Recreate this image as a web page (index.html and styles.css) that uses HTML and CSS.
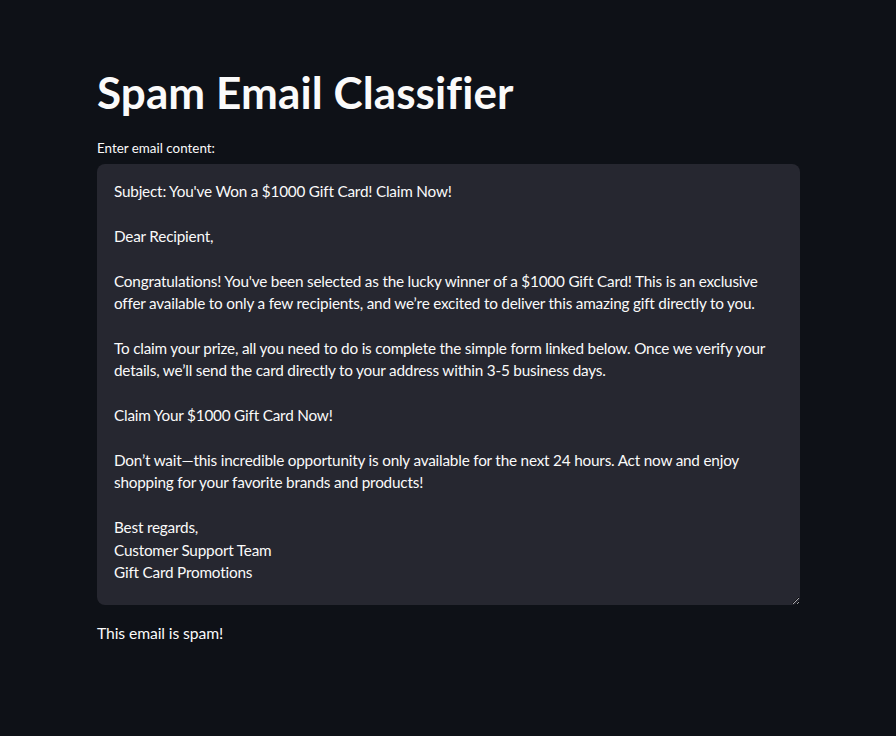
FILE: index.html
```html
<!DOCTYPE html>
<html lang="en">
<head>
<meta charset="utf-8">
<title>Spam Email Classifier</title>
<link rel="stylesheet" href="styles.css">
</head>
<body>
<main class="app">
  <h1 class="title">Spam Email Classifier</h1>
  <label class="label" for="email">Enter email content:</label>
  <textarea id="email" class="email-box">Subject: You've Won a $1000 Gift Card! Claim Now!

Dear Recipient,

Congratulations! You've been selected as the lucky winner of a $1000 Gift Card! This is an exclusive offer available to only a few recipients, and we’re excited to deliver this amazing gift directly to you.

To claim your prize, all you need to do is complete the simple form linked below. Once we verify your details, we’ll send the card directly to your address within 3-5 business days.

Claim Your $1000 Gift Card Now!

Don’t wait—this incredible opportunity is only available for the next 24 hours. Act now and enjoy shopping for your favorite brands and products!

Best regards,
Customer Support Team
Gift Card Promotions</textarea>
  <p class="result">This email is spam!</p>
</main>
</body>
</html>
```
FILE: styles.css
```css
html, body {
  margin: 0;
  padding: 0;
  background: #0e1117;
  color: #fafafa;
  font-family: Lato, "Noto Sans", sans-serif;
}
.app {
  width: 703px;
  margin: 0 0 0 97px;
  padding-top: 64px;
  display: flex;
  flex-direction: column;
}
.title {
  margin: 0;
  font-size: 44px;
  font-weight: 700;
  line-height: 56px;
  letter-spacing: 0.1px;
}
.label {
  margin-top: 18px;
  font-size: 13.4px;
  line-height: 20px;
  height: 20px;
}
.email-box {
  margin-top: 6px;
  box-sizing: border-box;
  width: 703px;
  height: 441px;
  background: #262730;
  color: #fafafa;
  border: none;
  border-radius: 8px;
  padding: 16px 17px;
  font-family: inherit;
  font-size: 15.3px;
  letter-spacing: -0.2px;
  line-height: 22.4px;
  outline: none;
  resize: vertical;
  overflow: hidden;
  color-scheme: dark;
}
.result {
  margin: 16px 0 0;
  font-size: 15.7px;
  letter-spacing: -0.1px;
  line-height: 24px;
}
```
